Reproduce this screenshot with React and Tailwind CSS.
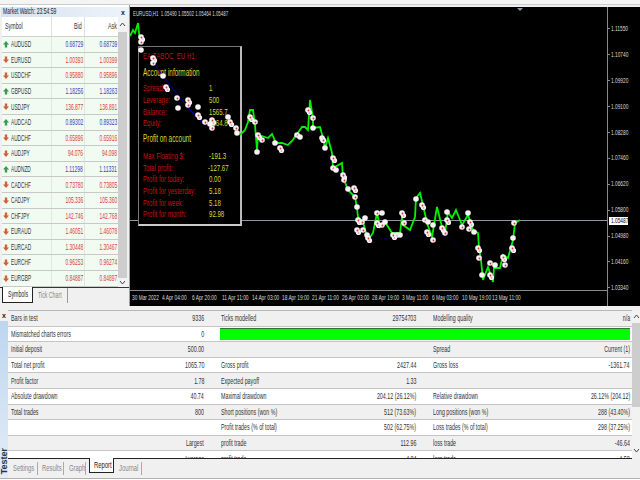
const watch = [
  ["AUDUSD", "0.68729", "0.68739", true],
  ["EURUSD", "1.00393", "1.00399", false],
  ["USDCHF", "0.95880", "0.95896", false],
  ["GBPUSD", "1.18256", "1.18263", true],
  ["USDJPY", "136.877", "136.891", false],
  ["AUDCAD", "0.89302", "0.89323", true],
  ["AUDCHF", "0.65896", "0.65916", false],
  ["AUDJPY", "94.076", "94.098", false],
  ["AUDNZD", "1.11298", "1.11331", true],
  ["CADCHF", "0.73780", "0.73805", false],
  ["CADJPY", "105.336", "105.360", false],
  ["CHFJPY", "142.746", "142.768", false],
  ["EURAUD", "1.46051", "1.46078", false],
  ["EURCAD", "1.30448", "1.30467", false],
  ["EURCHF", "0.96253", "0.96274", false],
  ["EURGBP", "0.84887", "0.84897", false],
];

const report = [
  ["Bars in test", "9336", "Ticks modelled", "29754703", "Modelling quality", "n/a"],
  ["Mismatched charts errors", "0"],
  ["Initial deposit", "500.00", "", "", "Spread", "Current (1)"],
  ["Total net profit", "1065.70", "Gross profit", "2427.44", "Gross loss", "-1361.74"],
  ["Profit factor", "1.78", "Expected payoff", "1.33", "", ""],
  ["Absolute drawdown", "40.74", "Maximal drawdown", "204.12 (26.12%)", "Relative drawdown", "26.12% (204.12)"],
  ["Total trades", "800", "Short positions (won %)", "512 (73.63%)", "Long positions (won %)", "288 (43.40%)"],
  ["", "", "Profit trades (% of total)", "502 (62.75%)", "Loss trades (% of total)", "298 (37.25%)"],
  ["", "Largest", "profit trade", "112.96", "loss trade", "-46.64"],
  ["", "Average", "profit trade", "4.84", "loss trade", "-4.58"],
];

const prices = ["1.11550", "1.10740", "1.09920", "1.09100", "1.08280", "1.07460", "1.06620", "1.05800", "1.04980", "1.04160", "1.03340"];
const times = ["30 Mar 2022", "4 Apr 04:00", "6 Apr 20:00", "11 Apr 11:00", "14 Apr 03:00", "18 Apr 19:00", "21 Apr 11:00", "26 Apr 03:00", "28 Apr 19:00", "3 May 11:00", "6 May 03:00", "10 May 19:00", "13 May 11:00"];

const greenA = "130,36 133,30 135,33 138,23 140,42";
const greenB =
  "240,135 245,130 248,122 250,110 253,110 255,125 257,150 258,135 262,136 268,138 272,134 276,143 282,143 288,145 292,141 297,134 302,127 305,127 308,130 310,100 313,118 313,128 320,127 323,138 325,148 328,138 332,153 333,168 342,163 343,177 348,190 355,197 357,208 358,217 363,222 368,240 373,233 377,213 380,227 385,222 392,233 400,233 402,217 403,225 410,230 415,217 416,198 420,193 423,205 427,223 432,237 437,207 442,227 445,233 448,212 452,218 456,210 462,225 468,215 473,230 478,233 479,248 481,260 483,280 488,267 493,282 494,268 500,268 503,255 508,258 513,240 515,223 520,220";

const dots = [
  [141, 37], [141, 42], [141, 50], [153, 58], [153, 63], [163, 76], [166, 87], [177, 98], [178, 108], [188, 100], [188, 105],
  [198, 107], [198, 115], [205, 122], [210, 124], [212, 120], [212, 128], [228, 117], [230, 122], [236, 128], [237, 133],
  [250, 117], [255, 122], [257, 152], [258, 135], [262, 140], [275, 143], [280, 148], [297, 135], [300, 137], [308, 110],
  [313, 118], [313, 128], [322, 138], [323, 140], [325, 148], [333, 158], [333, 168], [336, 170], [343, 175], [344, 180],
  [348, 189], [354, 188], [355, 197], [357, 207], [358, 220], [362, 222], [365, 218], [357, 230], [363, 230], [367, 235],
  [368, 238], [377, 213], [382, 213], [377, 223], [382, 225], [385, 222], [393, 235], [397, 235], [400, 235], [402, 213],
  [404, 223], [416, 199], [422, 205], [425, 220], [428, 222], [427, 232], [433, 240], [433, 225], [442, 228], [445, 233],
  [447, 212], [447, 220], [462, 227], [468, 213], [470, 222], [469, 229], [474, 232], [478, 248], [479, 258], [482, 275],
  [490, 275], [490, 263], [495, 265], [503, 257], [505, 265], [513, 238], [512, 248], [514, 223],
];

const accountRows = [
  ["Spread:", "1"],
  ["Leverage:", "500"],
  ["Balance:", "1565.7"],
  ["Equity:", "1564.8"],
];
const profitRows = [
  ["Max Floating $:", "-191.3"],
  ["Total profit:", "-127.67"],
  ["Profit for today:", "0.00"],
  ["Profit for yesterday:", "5.18"],
  ["Profit for week:", "5.18"],
  ["Profit for month:", "92.98"],
];

// the reference is squeezed sideways, so the text is too
function L({ children, className = "", sx = "scale-x-[0.56]" }) {
  return <span className={`inline-block whitespace-nowrap origin-left ${sx} ${className}`}>{children}</span>;
}

function R({ children, className = "", sx = "scale-x-[0.56]" }) {
  return <span className={`inline-block whitespace-nowrap origin-right ${sx} ${className}`}>{children}</span>;
}

function Arrow({ up }) {
  return (
    <svg width="6" height="7" viewBox="0 0 6 7" className="shrink-0">
      {up ? (
        <path d="M3 0 L6 3.5 L4.2 3.5 L4.2 6.5 L1.8 6.5 L1.8 3.5 L0 3.5 Z" fill="#3a9a50" />
      ) : (
        <path d="M3 7 L6 3.5 L4.2 3.5 L4.2 0.5 L1.8 0.5 L1.8 3.5 L0 3.5 Z" fill="#d0603a" />
      )}
    </svg>
  );
}

function MarketWatch() {
  return (
    <div className="w-[130px] shrink-0 bg-[#f0f0f0] border-r border-[#a0a0a0] flex flex-col h-full">
      <div className="h-[2px] bg-white" />
      <div className="h-[10px] mx-[1px] bg-gradient-to-r from-[#d5e2f0] to-[#eef3f9] flex items-center justify-between pl-[2px] pr-[3px] text-[9px] text-[#222]">
        <L>Market Watch: 23:54:59</L>
        <span className="font-bold text-[7px] leading-none">x</span>
      </div>
      <div className="flex flex-1 mx-[2px] bg-white min-h-0">
        <div className="w-[116px]">
          <div className="flex h-[20px] items-center border-b border-[#d0d0d0] text-[9.5px] text-[#333]">
            <div className="w-[50px] pl-[3px] border-r border-[#e0e0e0] h-full flex items-center"><L>Symbol</L></div>
            <div className="w-[33px] pr-[2px] text-right border-r border-[#e0e0e0] h-full flex items-center justify-end"><R>Bid</R></div>
            <div className="w-[33px] pr-[1px] flex justify-end"><R>Ask</R></div>
          </div>
          {watch.map(([sym, bid, ask, up]) => (
            <div key={sym} className="flex h-[15.6px] items-center border-b border-[#c8c8c8] bg-[#f1fbf1] text-[9.5px]">
              <div className="w-[50px] pl-[1px] flex items-center gap-[2px] border-r border-[#dfe8df] h-full text-[#333]">
                <Arrow up={up} />
                <L sx="scale-x-[0.5]">{sym}</L>
              </div>
              <div className={`w-[33px] pr-[1px] flex justify-end items-center border-r border-[#dfe8df] h-full ${up ? "text-[#3a3ec0]" : "text-[#e23b3b]"}`}>
                <R sx="scale-x-[0.52]">{bid}</R>
              </div>
              <div className={`w-[33px] pr-[1px] flex justify-end ${up ? "text-[#3a3ec0]" : "text-[#e23b3b]"}`}>
                <R sx="scale-x-[0.52]">{ask}</R>
              </div>
            </div>
          ))}
        </div>
        <div className="w-[10px] flex flex-col items-center bg-[#f2f2f2] text-[#444]">
          <div className="h-[15px] flex items-center">
            <svg width="7" height="5" viewBox="0 0 7 5"><path d="M1 4 L3.5 1 L6 4" fill="none" stroke="#444" strokeWidth="1" /></svg>
          </div>
          <div className="w-full flex-1 bg-[#cdcdcd]" />
          <div className="h-[9px] flex items-center">
            <svg width="7" height="5" viewBox="0 0 7 5"><path d="M1 1 L3.5 4 L6 1" fill="none" stroke="#444" strokeWidth="1" /></svg>
          </div>
        </div>
      </div>
      <div className="h-[19px] flex px-[2px] text-[9.5px] border-t border-[#333]">
        <div className="w-[31px] h-[16px] -mt-[1px] bg-white border border-t-0 border-[#222] flex items-center pl-[5px] text-[#222]">
          <L sx="scale-x-[0.55]">Symbols</L>
        </div>
        <div className="ml-[5px] w-[30px] h-[15px] flex items-center text-[#888] border-r border-[#999]">
          <L sx="scale-x-[0.55]">Tick Chart</L>
        </div>
      </div>
    </div>
  );
}

function Plot() {
  const sx = "scale-x-[0.64]";
  return (
    <div className="relative flex-1 overflow-hidden">
      <div className="absolute left-0 right-0 top-[213px] h-px bg-[#8c98a8]" />
      <div className="absolute left-[8px] top-[39px] w-[104px] h-[180px] bg-black border border-[#777] border-b-2 border-r-2 border-r-[#bbb] border-b-[#ccc] pl-[4px] pt-[3px] text-[9.5px] leading-[11.7px] text-[#c01414]">
        <L sx={sx} className="block">EA ZABOC&nbsp; EU H1</L>
        <L sx={sx} className="block mt-[5px] text-[10px] text-[#d8d83c]">Account information</L>
        <div className="mt-[4px]">
          {accountRows.map(([a, b]) => (
            <div key={a} className="flex h-[11.7px]">
              <div className="w-[66px]"><L sx={sx}>{a}</L></div>
              <L sx={sx} className="text-[#d8d83c]">{b}</L>
            </div>
          ))}
        </div>
        <L sx={sx} className="block mt-[4px] text-[10px] text-[#d8d83c]">Profit on account</L>
        <div className="mt-[5px]">
          {profitRows.map(([a, b]) => (
            <div key={a} className="flex h-[11.7px]">
              <div className="w-[66px]"><L sx={sx}>{a}</L></div>
              <L sx={sx} className="text-[#d8d83c]">{b}</L>
            </div>
          ))}
        </div>
      </div>
      <svg className="absolute inset-0" width="489" height="283" viewBox="130 7 489 283">
        <polyline points="155,65 172,88 190,110 205,125" fill="none" stroke="#000090" strokeWidth="1" />
        <polyline points="360,222 368,240 445,233 470,260" fill="none" stroke="#000060" strokeWidth="1" strokeDasharray="2 2" />
        <polyline points={greenA} fill="none" stroke="#00f000" strokeWidth="1.8" />
        <polyline points={greenB} fill="none" stroke="#00f000" strokeWidth="1.8" />
        {dots.map(([x, y], i) => (
          <g key={i}>
            <circle cx={x} cy={y} r="2.8" fill="#f8f2f4" />
            {i % 3 === 0 && <circle cx={x + 1.5} cy={y + 2.5} r="2.6" fill="#f8f2f4" />}
            {i % 3 !== 2 && <circle cx={x + 0.5} cy={y + 0.5} r="0.9" fill="#d8343c" />}
            {i % 3 === 0 && <circle cx={x + 1.5} cy={y + 3} r="0.8" fill="#e88a98" />}
          </g>
        ))}
        <path d="M517 8 L523 8 L520 11 Z" fill="#8c98a8" />
      </svg>
      <div className="absolute left-[3px] top-[1px] text-[8px] text-[#ddd]">
        <L sx="scale-x-[0.55]">EURUSD,H1&nbsp; 1.05490 1.05502 1.05464 1.05487</L>
      </div>
    </div>
  );
}

function Chart() {
  return (
    <div className="flex-1 bg-black border-t-2 border-[#eee] flex min-w-0 h-full">
      <div className="w-[489px] flex flex-col border-r border-[#8a8a8a]">
        <Plot />
        <div className="h-[16px] border-t border-[#8a8a8a] flex pl-[2px] text-[8px] text-[#ddd]">
          {times.map((t) => (
            <div key={t} className="w-[30px] shrink-0 pt-[1px]"><L sx="scale-x-[0.6]">{t}</L></div>
          ))}
        </div>
      </div>
      <div className="relative flex-1 pt-[9px] text-[8px] text-[#ddd]">
        {prices.map((p) => (
          <div key={p} className="h-[25.9px] flex items-center gap-[1px]">
            <div className="w-[2px] h-px bg-[#8a8a8a] shrink-0" />
            <L sx="scale-x-[0.6]">{p}</L>
          </div>
        ))}
        <div className="absolute left-[1px] top-[210px] w-[19px] h-[8px] bg-white text-black flex items-center pl-[2px]">
          <L sx="scale-x-[0.6]">1.05487</L>
        </div>
      </div>
    </div>
  );
}

function Cell({ label, value, first }) {
  return (
    <div className={`flex justify-between items-center ${first ? "pl-[3px]" : "pl-[15px]"} pr-[2px]`}>
      <L>{label}</L>
      <R>{value}</R>
    </div>
  );
}

function Report() {
  return (
    <div className="h-[148px] overflow-hidden border-t border-[#b8b8b8] text-[9.5px] text-[#333]">
      {report.map((r, i) => (
        <div
          key={i}
          className={`grid grid-cols-[198px_212px_214px] h-[15.6px] border-b border-[#c4c4c4] ${[0, 2, 4, 6, 8].includes(i) ? "bg-[#f0f0f0]" : "bg-white"}`}
        >
          <Cell first label={r[0]} value={r[1]} />
          {r.length === 2 ? (
            <div className="col-span-2 pl-[14px] pr-[2px] py-px">
              <div className="h-full bg-[#00ff00] border-t border-[#2b7a2b]" />
            </div>
          ) : (
            <>
              <Cell label={r[2]} value={r[3]} />
              <Cell label={r[4]} value={r[5]} />
            </>
          )}
        </div>
      ))}
    </div>
  );
}

function Tester() {
  return (
    <div className="flex flex-1 bg-[#f0f0f0] min-h-0">
      <div className="w-[8px] shrink-0 flex flex-col bg-[#f0f0f0]">
        <div className="h-[11px] flex items-center justify-center font-bold text-[7px] text-[#222] leading-none">x</div>
        <div className="flex-1 bg-gradient-to-b from-[#bcd6f0] to-[#e4edf6] flex items-end justify-center pb-[4px] overflow-hidden">
          <span className="[writing-mode:vertical-rl] rotate-180 text-[9px] font-bold text-[#234] leading-[8px]">Tester</span>
        </div>
      </div>
      <div className="flex-1 min-w-0 flex flex-col">
        <Report />
        <div className="h-[20px] border-t border-[#222] flex items-start pl-[5px] text-[9.5px] text-[#888]">
          {["Settings", "Results", "Graph"].map((t, i) => (
            <div key={t} className={`h-[13px] mt-[3px] flex items-center border-r border-[#aaa] ${i === 0 ? "w-[25px]" : i === 1 ? "w-[26px] pl-[4px]" : "w-[22px] pl-[5px]"}`}>
              <L sx="scale-x-[0.62]">{t}</L>
            </div>
          ))}
          <div className="h-[15px] -mt-px w-[25px] ml-[3px] bg-white border border-t-0 border-[#222] flex items-center pl-[4px] text-[#222]">
            <L sx="scale-x-[0.62]">Report</L>
          </div>
          <div className="h-[13px] mt-[3px] w-[28px] pl-[5px] flex items-center border-r border-[#aaa]">
            <L sx="scale-x-[0.62]">Journal</L>
          </div>
        </div>
      </div>
      <div className="w-[8px] shrink-0 flex flex-col items-center bg-[#f2f2f2] mb-[21px]">
        <div className="h-[13px] flex items-center">
          <svg width="7" height="5" viewBox="0 0 7 5"><path d="M1 4 L3.5 1 L6 4" fill="none" stroke="#444" strokeWidth="1" /></svg>
        </div>
        <div className="w-full h-[84px] bg-[#cdcdcd]" />
        <div className="flex-1 flex items-end pb-[4px]">
          <svg width="7" height="5" viewBox="0 0 7 5"><path d="M1 1 L3.5 4 L6 1" fill="none" stroke="#444" strokeWidth="1" /></svg>
        </div>
      </div>
    </div>
  );
}

export default function App() {
  return (
    <div className="w-[640px] h-[480px] overflow-hidden bg-white flex flex-col font-['Liberation_Sans',Arial,sans-serif]">
      <div className="h-[5px] bg-[#f4f4f4] border-b border-[#ccc] shrink-0" />
      <div className="h-[301px] flex shrink-0">
        <MarketWatch />
        <Chart />
      </div>
      <div className="h-[4px] bg-[#f0f0f0] shrink-0" />
      <div className="h-[168px] flex shrink-0">
        <Tester />
      </div>
      <div className="h-[2px] bg-white border-t border-[#b0b0b0] shrink-0" />
    </div>
  );
}
